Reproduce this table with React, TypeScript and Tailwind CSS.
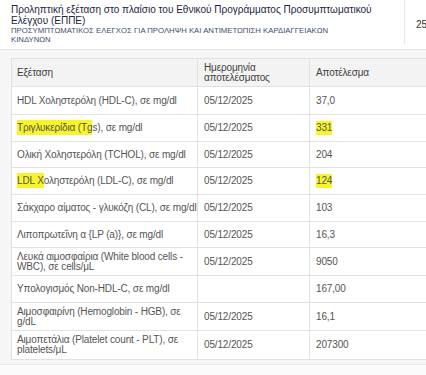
const rows = [
  { name: "HDL Χοληστερόλη (HDL-C), σε mg/dl", date: "05/12/2025", value: "37,0", h: "h-[28px]", one: true },
  { name: "tgs", date: "05/12/2025", value: "331", h: "h-[27px]", one: true },
  { name: "Ολική Χοληστερόλη (TCHOL), σε mg/dl", date: "05/12/2025", value: "204", h: "h-[26px]", one: true },
  { name: "ldl", date: "05/12/2025", value: "124", h: "h-[27px]", one: true },
  { name: "Σάκχαρο αίματος - γλυκόζη (CL), σε mg/dl", date: "05/12/2025", value: "103", h: "h-[27px]", one: true },
  { name: "Λιποπρωτεΐνη α {LP (a)}, σε mg/dl", date: "05/12/2025", value: "16,3", h: "h-[26px]", one: true },
  { name: "Λευκά αιμοσφαίρια (White blood cells - WBC), σε cells/μL", date: "05/12/2025", value: "9050", h: "h-[28px]", one: false },
  { name: "Υπολογισμός Non-HDL-C, σε mg/dl", date: "", value: "167,00", h: "h-[27px]", one: true },
  { name: "Αιμοσφαιρίνη (Hemoglobin - HGB), σε g/dL", date: "05/12/2025", value: "16,1", h: "h-[28px]", one: false },
  { name: "Αιμοπετάλια (Platelet count - PLT), σε platelets/μL", date: "05/12/2025", value: "207300", h: "h-[28px]", one: false },
];

const mark = "bg-[#f7f42a] py-[2px]";

function NameCell({ name }: { name: string }) {
  if (name === "tgs")
    return (
      <span>
        <span className={mark}>Τριγλυκερίδια (Tg</span>s), σε mg/dl
      </span>
    );
  if (name === "ldl")
    return (
      <span>
        <span className={mark}>LDL X</span>οληστερόλη (LDL-C), σε mg/dl
      </span>
    );
  return <span>{name}</span>;
}

function ResultsTable() {
  return (
    <div className="w-[420px] border border-[#e1e1e1] bg-white text-[10px] leading-[10px] tracking-[-0.15px] text-[#555]">
      <div className="flex h-[28px] bg-[#f3f3f3] border-b border-[#e1e1e1] text-[#3f3f3f]">
        <div className="w-[186px] shrink-0 flex items-center pl-[5px] border-r border-[#e1e1e1]">Εξέταση</div>
        <div className="w-[112px] shrink-0 flex items-center pl-[6px] border-r border-[#e1e1e1]">
          Ημερομηνία
          <br />
          αποτελέσματος
        </div>
        <div className="flex-1 flex items-center pl-[6px]">Αποτέλεσμα</div>
      </div>
      {rows.map((r, i) => (
        <div key={i} className={`flex ${r.h} ${i < rows.length - 1 ? "border-b border-[#e1e1e1]" : ""}`}>
          <div
            className={`w-[186px] shrink-0 flex items-center pl-[5px] pr-[4px] border-r border-[#e1e1e1] ${
              r.one ? "whitespace-nowrap" : ""
            }`}
          >
            <NameCell name={r.name} />
          </div>
          <div className="w-[112px] shrink-0 flex items-center pl-[6px] border-r border-[#e1e1e1]">{r.date}</div>
          <div className="flex-1 flex items-center pl-[6px]">
            {r.value === "331" || r.value === "124" ? <span className={mark}>{r.value}</span> : r.value}
          </div>
        </div>
      ))}
    </div>
  );
}

export default function App() {
  return (
    <div className="w-[426px] h-[375px] overflow-hidden bg-[#fbfbfb] font-['Liberation_Sans',Arial,sans-serif]">
      <div className="flex h-[50px] bg-white border-b border-[#e3e3e3]">
        <div className="w-[405px] shrink-0 border-r border-[#e6e6e6] pl-[11px] pt-[4px] mb-[5px]">
          <p className="text-[10px] leading-[11px] text-[#1b2640] w-[385px]">
            Προληπτική εξέταση στο πλαίσιο του Εθνικού Προγράμματος Προσυμπτωματικού Ελέγχου (ΕΠΠΕ)
          </p>
          <p className="text-[7.75px] leading-[9px] text-[#3d4e6e] w-[385px]">
            ΠΡΟΣΥΜΠΤΩΜΑΤΙΚΟΣ ΕΛΕΓΧΟΣ ΓΙΑ ΠΡΟΛΗΨΗ ΚΑΙ ΑΝΤΙΜΕΤΩΠΙΣΗ ΚΑΡΔΙΑΓΓΕΙΑΚΩΝ
            <br />
            ΚΙΝΔΥΝΩΝ
          </p>
        </div>
        <div className="flex items-center pl-[11px] text-[10px] text-[#333]">25</div>
      </div>
      <div className="h-[315px] bg-[#f6f6f6] border-b border-[#e6e6e6] pl-[11px] pt-[8px]">
        <ResultsTable />
      </div>
    </div>
  );
}
